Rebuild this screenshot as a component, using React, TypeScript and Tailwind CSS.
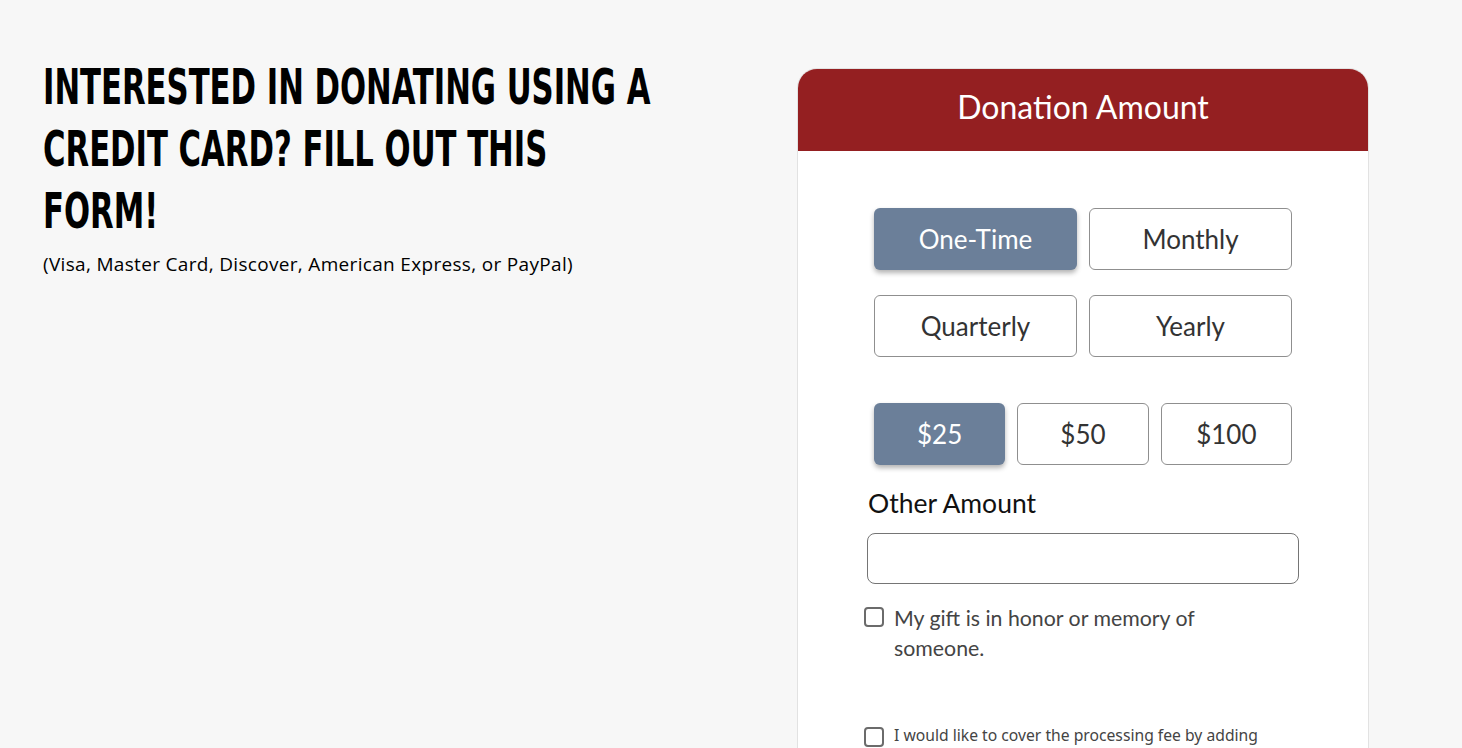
import React from "react";

const btnBase =
  "h-[62px] rounded-[6px] text-[26px] flex items-center justify-center";
const inactive = "bg-white border border-[#8f8f8f] text-[#333333]";
const active =
  "bg-[#6b7f99] text-white shadow-[0_3px_5px_rgba(0,0,0,0.3)]";

export default function App() {
  return (
    <div className="min-h-[748px] h-[748px] overflow-hidden bg-[#f7f7f7] flex">
      <div className="w-[797px] shrink-0 pl-[43px] pt-[57px]">
        <h1
          className="text-[49px] leading-[62px] font-bold text-black uppercase whitespace-nowrap origin-left scale-x-[0.696]"
          style={{ fontFamily: '"DejaVu Sans Condensed", "DejaVu Sans", sans-serif' }}
        >
          Interested in donating using a
          <br />
          credit card? Fill out this
          <br />
          form!
        </h1>
        <p
          className="text-[19px] leading-[26px] text-black mt-[8px] tracking-[0.32px]"
          style={{ fontFamily: '"Open Sans", sans-serif', fontWeight: 400 }}
        >
          (Visa, Master Card, Discover, American Express, or PayPal)
        </p>
      </div>
      <div className="pt-[68px]">
        <div
          className="w-[572px] h-[700px] bg-white border border-[#e2e2e2] rounded-t-[20px] overflow-hidden"
          style={{ fontFamily: 'Lato, "Noto Sans", sans-serif' }}
        >
          <div className="h-[82px] bg-[#941f21] flex items-center justify-center text-white text-[32px] pb-[6px]">
            Donation Amount
          </div>
          <div className="pl-[66px] pr-[66px] pt-[57px]">
            <div className="px-[10px]">
              <div className="grid grid-cols-2 gap-x-[12px] gap-y-[25px]">
                <div className={`${btnBase} ${active}`}>One-Time</div>
                <div className={`${btnBase} ${inactive}`}>Monthly</div>
                <div className={`${btnBase} ${inactive}`}>Quarterly</div>
                <div className={`${btnBase} ${inactive}`}>Yearly</div>
              </div>
              <div className="grid grid-cols-3 gap-x-[12px] mt-[46px]">
                <div className={`${btnBase} ${active}`}>$25</div>
                <div className={`${btnBase} ${inactive}`}>$50</div>
                <div className={`${btnBase} ${inactive}`}>$100</div>
              </div>
            </div>
            <div className="pl-[4px] mt-[23px] text-[26.5px] leading-[30px] text-[#111]">
              Other Amount
            </div>
            <div className="ml-[3px] mt-[15px] h-[51px] w-[432px] rounded-[8px] border border-[#757575] bg-white"></div>
            <div className="flex items-start mt-[23px]">
              <div className="w-[20px] h-[20px] rounded-[4px] border-2 border-[#6b6b6b] shrink-0"></div>
              <div className="ml-[10px] text-[21.3px] leading-[30px] text-[#444] -mt-[4px] w-[330px]">
                My gift is in honor or memory of someone.
              </div>
            </div>
            <div className="flex items-start mt-[64px]">
              <div className="w-[20px] h-[20px] rounded-[4px] border-2 border-[#6b6b6b] shrink-0"></div>
              <div className="ml-[10px] text-[15.7px] leading-[20px] text-[#444] -mt-[2px]" style={{ fontFamily: '"Noto Sans", sans-serif' }}>
                I would like to cover the processing fee by adding
              </div>
            </div>
          </div>
        </div>
      </div>
    </div>
  );
}
